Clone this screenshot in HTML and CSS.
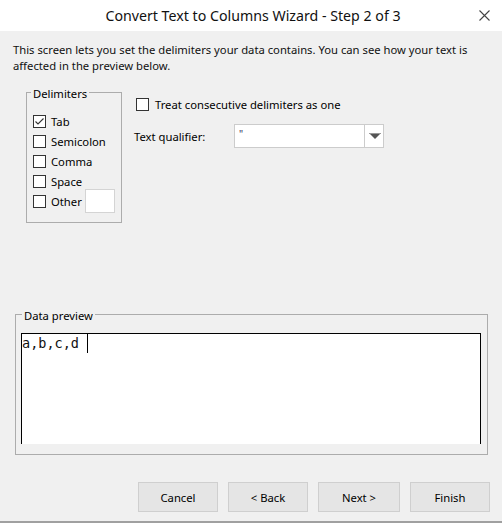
FILE: index.html
```html
<!DOCTYPE html>
<html lang="en">
<head>
<meta charset="utf-8">
<title>Convert Text to Columns Wizard - Step 2 of 3</title>
<link rel="stylesheet" href="styles.css">
</head>
<body>
<div class="window">
  <header class="titlebar">
    <span class="tb-side"></span>
    <h1 class="title">Convert Text to Columns Wizard - Step 2 of 3</h1>
    <span class="tb-side tb-right">
      <svg class="close" width="11" height="11" viewBox="0 0 11 11"><path d="M0.5 0.5 L10.5 10.5 M10.5 0.5 L0.5 10.5" stroke="#444" stroke-width="1.1" fill="none"/></svg>
    </span>
  </header>

  <p class="desc">This screen lets you set the delimiters your data contains. You can see how your text is<br>affected in the preview below.</p>

  <div class="options">
    <fieldset class="group delims">
      <legend class="legend">Delimiters</legend>
      <div class="check"><span class="box"><svg width="11" height="11" viewBox="0 0 11 11"><path d="M1.5 5.5 L4 8 L9.5 2.5" stroke="#333" stroke-width="1.1" fill="none"/></svg></span>Tab</div>
      <div class="check"><span class="box"></span>Semicolon</div>
      <div class="check"><span class="box"></span>Comma</div>
      <div class="check"><span class="box"></span>Space</div>
      <div class="check"><span class="box"></span>Other<span class="textbox"></span></div>
    </fieldset>

    <div class="side">
      <div class="check treat"><span class="box"></span>Treat consecutive delimiters as one</div>
      <div class="qual">
        <span class="qual-label">Text qualifier:</span>
        <div class="combo">
          <span class="combo-val">"</span>
          <span class="combo-btn"><svg width="12" height="7" viewBox="0 0 12 7"><path d="M0 0 H12 L6 6 Z" fill="#555"/><path d="M0 0.5 H12" stroke="#999" stroke-width="1"/></svg></span>
        </div>
      </div>
    </div>
  </div>

  <fieldset class="group preview-group">
    <legend class="legend">Data preview</legend>
    <div class="preview"><span class="cell">a,b,c,d</span></div>
  </fieldset>

  <footer class="buttons">
    <button class="btn">Cancel</button>
    <button class="btn">&lt; Back</button>
    <button class="btn btn-wide">Next &gt;</button>
    <button class="btn">Finish</button>
  </footer>
</div>
</body>
</html>
```

FILE: styles.css
```css
* { box-sizing: border-box; }

html, body {
  margin: 0;
  padding: 0;
}

body {
  background: #f0f0f0;
  font-family: "Noto Sans", "Open Sans", sans-serif;
  font-size: 11.25px;
  color: #000;
}

.window {
  width: 502px;
  height: 523px;
  display: flex;
  flex-direction: column;
  background: #f0f0f0;
  border-bottom: 2px solid #a0a0a0;
}

.titlebar {
  height: 31px;
  background: #fff;
  display: grid;
  grid-template-columns: 1fr auto 1fr;
  align-items: center;
}

.title {
  margin: 0;
  font-size: 14.2px;
  font-weight: normal;
  line-height: 20px;
  padding-top: 1px;
  padding-left: 4px;
  color: #111;
}

.tb-right {
  display: flex;
  justify-content: flex-end;
  padding-right: 12px;
  padding-bottom: 1px;
}

.close { display: block; }

.desc {
  margin: 11px 0 0 13px;
  line-height: 16px;
  color: #111;
}

.options {
  display: flex;
  align-items: flex-start;
  margin-top: 8px;
}

.group {
  margin: 0;
  border: 1px solid #acacac;
  min-inline-size: 0;
}

.legend {
  padding: 4px 2px 0;
  line-height: 16px;
  margin-left: -2px;
}

.delims {
  margin-left: 26px;
  width: 96px;
  padding: 9px 0 11px 6px;
}

.check {
  display: flex;
  align-items: center;
  height: 20px;
  white-space: nowrap;
}

.box {
  width: 13px;
  height: 13px;
  border: 1px solid #333;
  background: #fff;
  margin-right: 5px;
  display: flex;
  align-items: center;
  justify-content: center;
  flex: none;
}

.textbox {
  width: 30px;
  height: 24px;
  margin: -2px 0 -2px 3px;
  background: #fff;
  border: 1px solid #d4d4d4;
  flex: none;
}

.side {
  margin-left: 12px;
  padding-top: 12px;
}

.treat { padding-left: 2px; }
.treat .box { margin-right: 6px; }

.qual {
  display: flex;
  align-items: center;
  margin-top: 10px;
}

.qual-label {
  width: 100px;
}

.combo {
  width: 150px;
  height: 24px;
  background: #fff;
  border: 1px solid #cccccc;
  display: flex;
}

.combo-val {
  flex: 1;
  padding-left: 4px;
  line-height: 18px;
  font-size: 10px;
  color: #335;
}

.combo-btn {
  width: 19px;
  border-left: 1px solid #cccccc;
  display: flex;
  align-items: center;
  justify-content: center;
  padding-left: 1px;
}

.preview-group {
  margin: 81px 0 0 15px;
  width: 473px;
  padding: 9px 6px 10px 5px;
}

.preview-group .legend {
  margin-left: 1px;
}

.preview {
  height: 111px;
  background: #fff;
  border: 1px solid #000;
  border-bottom: none;
}

.cell {
  display: block;
  width: 66px;
  height: 19px;
  border-right: 1px solid #000;
  font-family: "DejaVu Sans Mono", "Liberation Mono", monospace;
  font-size: 13.5px;
  line-height: 19px;
  color: #111;
}

.buttons {
  display: flex;
  justify-content: flex-end;
  gap: 10px;
  margin-top: 27px;
  padding-right: 12px;
}

.btn {
  width: 80px;
  height: 30px;
  background: #e5e5e5;
  border: 1px solid #cfcfcf;
  font-family: inherit;
  font-size: 11.25px;
  color: #000;
  padding: 0;
}

.btn-wide { width: 82px; }
```
